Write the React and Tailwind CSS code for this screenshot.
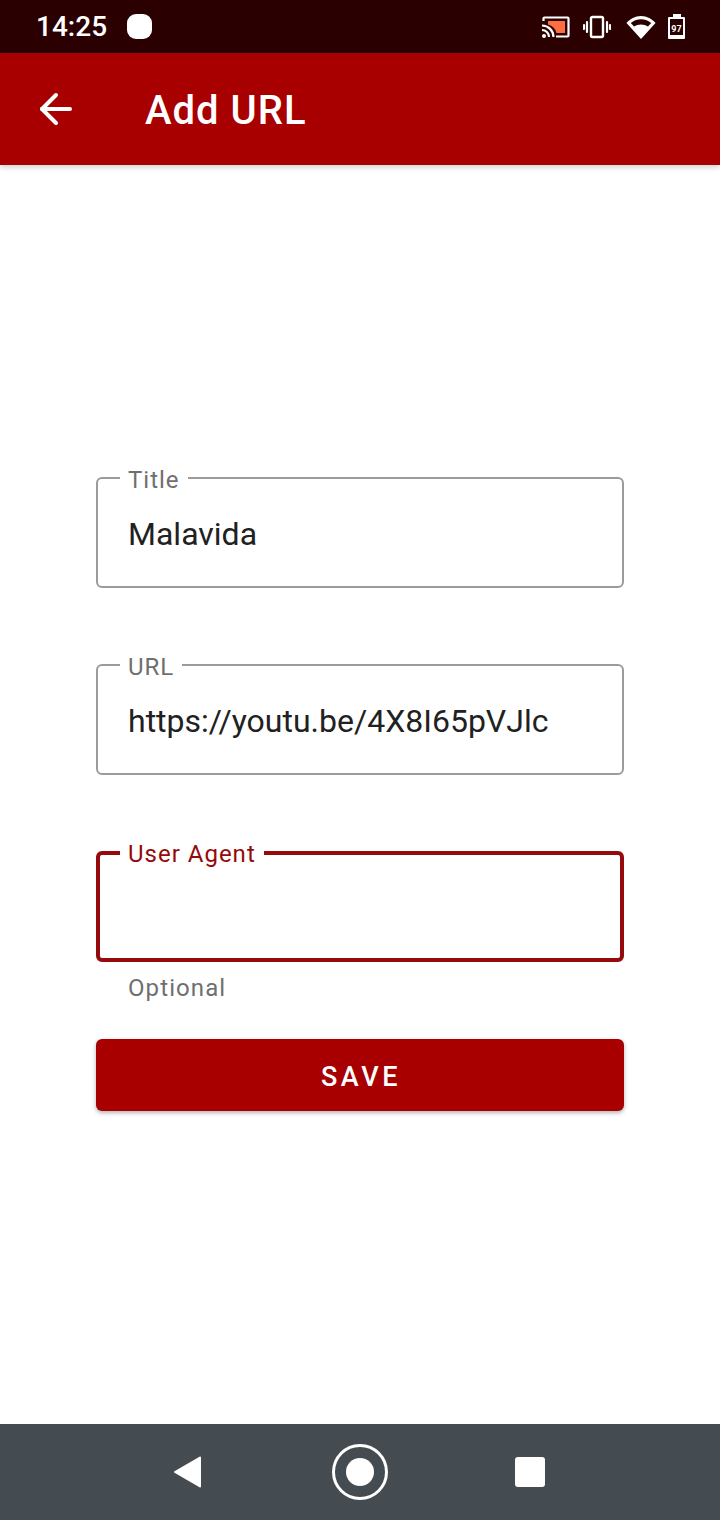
import { ArrowLeft } from 'lucide-react'

function StatusIcons() {
  return (
    <div className="flex items-center">
      <svg width="28" height="22" viewBox="0 0 28 22" className="mr-[13px]">
        <path d="M6 5h17v12H14.500A12 12 0 0 0 6 8.500z" fill="#ff6e40" />
        <path d="M1.500 5V2.500a1 1 0 0 1 1-1h23a1 1 0 0 1 1 1v17a1 1 0 0 1-1 1H14" fill="none" stroke="#fff" strokeWidth="2.200" />
        <path d="M0 9.500A11.500 11.500 0 0 1 11.500 21" fill="none" stroke="#fff" strokeWidth="2.200" />
        <path d="M0 14a7 7 0 0 1 7 7" fill="none" stroke="#fff" strokeWidth="2.200" />
        <circle cx="2" cy="20" r="2" fill="#fff" />
      </svg>
      <svg width="28" height="24" viewBox="0 0 28 24" className="mr-[15px]">
        <rect x="8" y="2" width="12" height="20" rx="1.500" fill="none" stroke="#fff" strokeWidth="2.400" />
        <path d="M4 7v10M24 7v10M1 10v4M27 10v4" stroke="#fff" strokeWidth="2.200" strokeLinecap="round" />
      </svg>
      <svg width="30" height="24" viewBox="0 0 30 24" className="mr-[12px]">
        <path d="M0.500 8C4 4.200 9 1 15 1S26 4.200 29.500 8L15 24z" fill="#fff" />
        <path d="M4.800 8C7.500 5.600 11 4.200 15 4.200S22.500 5.600 25.200 8L22 11.600C20 10.200 17.600 9.400 15 9.400S10 10.200 8 11.600z" fill="#2a0000" />
      </svg>
      <div className="flex h-[25px] w-[17px] flex-col items-center">
        <div className="h-[3px] w-[8px] bg-white" />
        <div className="flex w-full flex-1 flex-col rounded-[1px] bg-white p-[2px] pb-[4px]">
          <div className="flex flex-1 items-end justify-center bg-[#2a0000] pb-[1px]">
            <span className="text-[9px] leading-none font-bold text-white">97</span>
          </div>
        </div>
      </div>
    </div>
  )
}

function Field({ label, value, focused, hint }) {
  return (
    <div>
      <div className={`relative h-[111px] rounded-[6px] border-solid bg-white ${focused ? 'border-[4px] border-[#950a0a] px-[28px]' : 'border-2 border-[#9b9b9b] px-[30px]'}`}>
        <span className={`absolute bg-white px-[8px] text-[24px] leading-[28px] tracking-[1px] ${focused ? 'top-[-15px] left-[20px] text-[#950a0a]' : 'top-[-13px] left-[22px] text-[#6f6f6f]'}`}>
          {label}
        </span>
        <div className="flex h-full items-center pt-[3px] text-[32px] text-[#212121]">{value}</div>
      </div>
      {hint && <div className="mt-[11px] pl-[32px] text-[24px] leading-[30px] tracking-[1.100px] text-[#6f6f6f]">{hint}</div>}
    </div>
  )
}

export default function App() {
  return (
    <div className="flex h-[1520px] w-[720px] flex-col bg-white font-['Roboto',sans-serif]">
      <div className="flex h-[53px] items-center justify-between bg-[#2a0000] pr-[35px] pl-[36px]">
        <div className="flex items-center gap-[20px]">
          <span className="text-[28px] font-medium text-white">14:25</span>
          <div className="h-[25px] w-[25px] rounded-[9px] bg-white" />
        </div>
        <StatusIcons />
      </div>

      <div className="z-10 flex h-[112px] items-center bg-[#a80000] pl-[32px] shadow-[0_2px_6px_rgba(0,0,0,0.2)]">
        <ArrowLeft size={48} strokeWidth={2} className="text-white" />
        <h1 className="ml-[65px] pt-[4px] text-[40px] font-medium tracking-[1px] text-white">Add URL</h1>
      </div>

      <div className="flex flex-1 flex-col px-[96px] pt-[312px]">
        <div className="flex flex-col gap-[76px]">
          <Field label="Title" value="Malavida" />
          <Field label="URL" value="https://youtu.be/4X8I65pVJlc" />
          <Field label="User Agent" focused hint="Optional" />
        </div>
        <button className="mt-[36px] h-[72px] w-full rounded-[6px] bg-[#a80000] pt-[4px] pl-[2px] text-[27px] font-medium tracking-[3.600px] text-white shadow-[0_2px_4px_rgba(0,0,0,0.3)]">
          SAVE
        </button>
      </div>

      <div className="flex h-[96px] items-center justify-center bg-[#454c51] pr-[4px]">
        <svg width="32" height="34" viewBox="0 0 32 34" className="mr-[128px]">
          <path d="M28 2.500 3 17l25 14.500z" fill="#fff" stroke="#fff" strokeWidth="2" strokeLinejoin="round" />
        </svg>
        <div className="flex h-[56px] w-[56px] items-center justify-center rounded-full border-[3px] border-solid border-white">
          <div className="h-[28px] w-[28px] rounded-full bg-white" />
        </div>
        <div className="ml-[127px] h-[30px] w-[30px] rounded-[3px] bg-white" />
      </div>
    </div>
  )
}
